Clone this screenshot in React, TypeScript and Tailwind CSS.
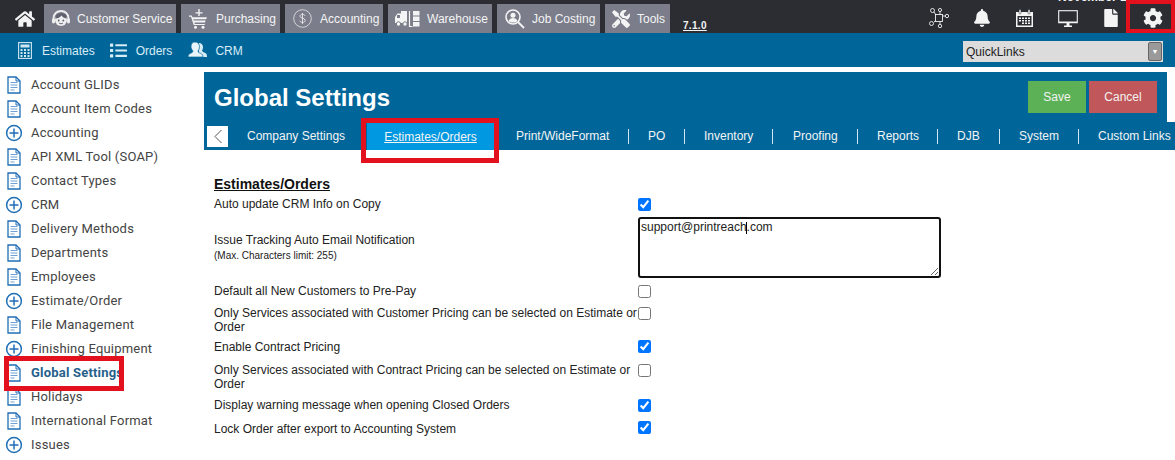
import type { ReactNode } from "react";
import { FaHome, FaBell, FaFile, FaCog, FaTools, FaList } from "react-icons/fa";

const sidebarItems = [
  { label: "Account GLIDs", kind: "doc" },
  { label: "Account Item Codes", kind: "doc" },
  { label: "Accounting", kind: "plus" },
  { label: "API XML Tool (SOAP)", kind: "doc" },
  { label: "Contact Types", kind: "doc" },
  { label: "CRM", kind: "plus" },
  { label: "Delivery Methods", kind: "doc" },
  { label: "Departments", kind: "doc" },
  { label: "Employees", kind: "doc" },
  { label: "Estimate/Order", kind: "plus" },
  { label: "File Management", kind: "doc" },
  { label: "Finishing Equipment", kind: "plus" },
  { label: "Global Settings", kind: "doc", active: true },
  { label: "Holidays", kind: "doc" },
  { label: "International Format", kind: "doc" },
  { label: "Issues", kind: "plus" },
  { label: "", kind: "doc" },
];

const settingsTabs = [
  { label: "Print/WideFormat", size: "w-[135px] pl-[22px]" },
  { label: "PO", size: "w-[56px] pl-[19px]" },
  { label: "Inventory", size: "w-[88px] pl-[19px]" },
  { label: "Proofing", size: "w-[85px] pl-[20px]" },
  { label: "Reports", size: "w-[80px] pl-[19px]" },
  { label: "DJB", size: "w-[62px] pl-[19px]" },
  { label: "System", size: "w-[79px] pl-[19px]" },
];

function DocIcon() {
  return (
    <svg width="16" height="18" viewBox="0 0 16 18" fill="none" className="shrink-0">
      <path d="M2 1h8l4 4v12H2z" stroke="#1f6fb5" strokeWidth="1.3" fill="#fff" />
      <path d="M10 1v4h4" stroke="#1f6fb5" strokeWidth="1" />
      <path d="M4.500 6.500h7M4.500 9h7M4.500 11.500h7M4.500 14h4" stroke="#6fa3d6" strokeWidth="1.2" />
    </svg>
  );
}

function PlusIcon() {
  return (
    <svg width="18" height="18" viewBox="0 0 18 18" fill="none" className="ml-[-1px] mr-[-1px] shrink-0">
      <circle cx="9" cy="9" r="7.400" stroke="#1f6fb5" strokeWidth="1.500" />
      <path d="M9 4.500v9M4.500 9h9" stroke="#1f6fb5" strokeWidth="1.500" />
    </svg>
  );
}

function AgentIcon() {
  return (
    <svg width="20" height="20" viewBox="0 0 20 20" fill="none">
      <path d="M2.500 12V9.500C2.500 5 6 2 10 2s7.500 3 7.500 7.500V12" stroke="#eeeef0" strokeWidth="2" />
      <rect x="1" y="9.500" width="3" height="5" rx="1.400" fill="#eeeef0" />
      <rect x="16" y="9.500" width="3" height="5" rx="1.400" fill="#eeeef0" />
      <circle cx="10" cy="11" r="6" fill="#eeeef0" />
      <path d="M4.500 9.500C7 9.500 9 8.500 10.500 6.500c1 1.500 2.500 2.700 5 3L15 5.500 10 4 5.500 5.500z" fill="#5f626d" />
      <circle cx="7.700" cy="11.500" r=".9" fill="#5f626d" />
      <circle cx="12.300" cy="11.500" r=".9" fill="#5f626d" />
      <path d="M8 14c1.300 1 2.700 1 4 0" stroke="#5f626d" strokeWidth=".9" />
    </svg>
  );
}

function CartIcon() {
  return (
    <svg width="18" height="20" viewBox="0 0 18 20" fill="#f4f4f5">
      <path d="M9.300 0h1.400v3.200H13.500v1.300h-2.800V7H9.300V4.500H6.500V3.200h2.800z" />
      <path d="M0 6.500h2.800l.7 1.700H18l-.9 2H4.300l.4 1.300h11.900l-.6 2H5.400l.4 1.400h10v1.200H4.700L2 7.700H0z" />
      <circle cx="6.500" cy="18.300" r="1.500" />
      <circle cx="14" cy="18.300" r="1.500" />
    </svg>
  );
}

function DollarIcon() {
  return (
    <svg width="19" height="19" viewBox="0 0 19 19" fill="none">
      <circle cx="9.500" cy="9.500" r="8.800" stroke="#e8e8ea" strokeWidth=".8" />
      <path d="M12 6.800c-.4-1-1.300-1.500-2.500-1.500-1.400 0-2.500.7-2.500 1.900 0 2.600 5.200 1.400 5.200 4.200 0 1.200-1.200 2-2.700 2-1.300 0-2.400-.6-2.800-1.700M9.500 4v11" stroke="#e8e8ea" strokeWidth=".9" />
    </svg>
  );
}

function WarehouseIcon() {
  return (
    <svg width="25" height="18" viewBox="0 0 25 18" fill="none">
      <path d="M0 13V7l2.500-3.500H6V1h6v12z" fill="#f4f4f5" />
      <rect x="2" y="5" width="3" height="3" fill="#7b7e8a" />
      <circle cx="3.500" cy="14" r="2.200" fill="#f4f4f5" stroke="#7b7e8a" />
      <circle cx="10" cy="14" r="2.200" fill="#f4f4f5" stroke="#7b7e8a" />
      <path d="M14.500 1v15.500h3" stroke="#f4f4f5" strokeWidth="1.200" />
      <rect x="18" y="1" width="6.500" height="4.500" fill="#f4f4f5" />
      <rect x="18" y="6.500" width="6.500" height="4.500" fill="#f4f4f5" />
      <rect x="18" y="12" width="6.500" height="4.500" fill="#f4f4f5" />
    </svg>
  );
}

function CostingIcon() {
  return (
    <svg width="20" height="20" viewBox="0 0 20 20" fill="none">
      <circle cx="8" cy="8" r="7" stroke="#f4f4f5" strokeWidth="1.600" />
      <circle cx="8" cy="6.200" r="2.500" fill="#f4f4f5" />
      <path d="M3.500 12c.8-2 2.500-3 4.500-3s3.700 1 4.500 3c-2.500 2-6.500 2-9 0z" fill="#f4f4f5" />
      <path d="M13 13l6 6" stroke="#f4f4f5" strokeWidth="1.800" />
    </svg>
  );
}

function NetworkIcon() {
  return (
    <svg width="20" height="20" viewBox="0 0 20 20" fill="none" stroke="#f0f0f2" strokeWidth=".9">
      <rect x="6.500" y="6.500" width="7" height="7" />
      <circle cx="3.500" cy="2.500" r="2" />
      <circle cx="11" cy="2" r="1.600" />
      <circle cx="18" cy="8" r="1.700" />
      <circle cx="2.500" cy="15.500" r="2" />
      <circle cx="11" cy="18" r="1.700" />
      <path d="M5 4l2 3M11 3.500v3M13.500 8h3M5 14l2-1.500M11 13.500v3" />
    </svg>
  );
}

function CalendarIcon() {
  return (
    <svg width="19" height="19" viewBox="0 0 19 19" fill="none">
      <path d="M1 3h17v15H1z" fill="#f4f4f5" />
      <rect x="2.500" y="7" width="14" height="9.500" fill="#2b2d33" />
      <rect x="4" y="0.500" width="2" height="4.500" rx="1" fill="#f4f4f5" stroke="#2b2d33" strokeWidth=".5" />
      <rect x="13" y="0.500" width="2" height="4.500" rx="1" fill="#f4f4f5" stroke="#2b2d33" strokeWidth=".5" />
      <path d="M4 8.500h2v1.600H4zM7 8.500h2v1.600H7zM10 8.500h2v1.600h-2zM13 8.500h2v1.600h-2zM4 11h2v1.600H4zM7 11h2v1.600H7zM10 11h2v1.600h-2zM13 11h2v1.600h-2zM7 13.500h2v1.600H7zM10 13.500h2v1.600h-2zM13 13.500h2v1.600h-2z" fill="#f4f4f5" />
    </svg>
  );
}

function MonitorIcon() {
  return (
    <svg width="20" height="19" viewBox="0 0 20 19" fill="none">
      <rect x=".7" y="1.700" width="18.600" height="12" stroke="#f4f4f5" strokeWidth="1.100" />
      <path d="M1 12.500h18v1.500H1zM8.500 14h3v2.500h-3zM6 16.500h8V18H6z" fill="#f4f4f5" />
    </svg>
  );
}

function CalculatorIcon() {
  return (
    <svg width="14" height="17" viewBox="0 0 14 17" fill="none">
      <rect x=".6" y=".6" width="12.800" height="15.800" stroke="#cfe6f2" strokeWidth="1.100" />
      <rect x="2.500" y="2.500" width="9" height="3" fill="#cfe6f2" />
      <path d="M2.500 7h2v2h-2zM6 7h2v2H6zM9.500 7h2v2h-2zM2.500 10h2v2h-2zM6 10h2v2H6zM9.500 10h2v2h-2zM2.500 13h2v2h-2zM6 13h2v2H6zM9.500 13h2v2h-2z" fill="#cfe6f2" />
    </svg>
  );
}

function ContactsIcon() {
  return (
    <svg width="19" height="18" viewBox="0 0 19 18" fill="none">
      <path d="M11 2c2.500 0 4 1.800 4 4.300 0 1.300-.4 2.500-1 3.300.3 1.400 2.500 2 4 3 .7.500 1 1.500 1 3.400H11z" fill="#d8ecf6" />
      <path d="M7 1c2.800 0 4.500 2 4.500 4.800 0 1.600-.5 3-1.300 3.900-.2 1 .1 1.500 1 2 1.700.8 3.800 1.300 3.800 4.300H0c0-3 2.100-3.500 3.800-4.300.9-.5 1.200-1 1-2C4 8.800 3 7.400 3 5.800 3 3 4.200 1 7 1z" fill="#e8f4fa" stroke="#00669a" strokeWidth=".7" />
    </svg>
  );
}

function TopTab({ icon, label, size }: { icon: ReactNode; label: string; size: string }) {
  return (
    <div className={`flex h-[29px] items-center bg-[#7b7e8a] text-xs text-[#f4f4f5] ${size}`}>
      {icon}
      <span className="pt-[1px]">{label}</span>
    </div>
  );
}

type SettingRowProps = {
  label: string;
  size: string;
  checked?: boolean;
  boxOffset?: string;
};

function SettingRow({ label, size, checked, boxOffset = "" }: SettingRowProps) {
  return (
    <div className={`flex ${size}`}>
      <label className="w-[424px] text-xs leading-[14px] text-[#222]">{label}</label>
      <input type="checkbox" defaultChecked={checked} className={`m-0 h-[13px] w-[13px] ${boxOffset}`} />
    </div>
  );
}

export default function App() {
  return (
    <div className="relative h-[460px] w-[1175px] overflow-hidden bg-white font-['Liberation_Sans',Arial,sans-serif]">
      {/* top bar */}
      <div className="flex h-[33px] items-end bg-[#2b2d33]">
        <div className="flex h-[29px] w-[44px] items-center justify-center pl-[5px] text-[#f4f4f5]">
          <FaHome size={20} />
        </div>
        <div className="flex gap-[5px]">
          <TopTab icon={<AgentIcon />} label="Customer Service" size="w-[132px] gap-[6px] pl-[7px]" />
          <TopTab icon={<CartIcon />} label="Purchasing" size="w-[99px] gap-[9px] pl-[8px]" />
          <TopTab icon={<DollarIcon />} label="Accounting" size="w-[98px] gap-[8px] pl-[8px]" />
          <TopTab icon={<WarehouseIcon />} label="Warehouse" size="w-[104px] gap-[7px] pl-[7px]" />
          <TopTab icon={<CostingIcon />} label="Job Costing" size="w-[103px] gap-[7px] pl-[8px]" />
          <TopTab icon={<FaTools size={18} />} label="Tools" size="w-[65px] gap-[7px] pl-[7px]" />
        </div>
        <span className="mb-[2px] ml-[13px] text-[10px] leading-[11px] font-bold tracking-[0.3px] text-[#f4f4f5] underline">7.1.0</span>
        <div className="ml-auto flex h-[33px] items-center pt-[3px] text-[#f4f4f5]">
          <div className="flex w-[43px] justify-center"><NetworkIcon /></div>
          <div className="flex w-[43px] justify-center"><FaBell size={18} /></div>
          <div className="flex w-[43px] justify-center"><CalendarIcon /></div>
          <div className="relative flex w-[43px] justify-center">
            <span className="absolute top-[-20px] left-[12px] text-xs font-bold whitespace-nowrap">November 1</span>
            <MonitorIcon />
          </div>
          <div className="flex w-[43px] justify-center"><FaFile size={18} /></div>
          <div className="flex w-[43px] justify-center pr-[1px]"><FaCog size={20} /></div>
        </div>
      </div>

      {/* second bar */}
      <div className="flex h-[34px] items-center bg-[#00669a] pl-[18px] text-xs text-[#d8ecf6]">
        <CalculatorIcon />
        <span className="ml-[10px] pt-[2px]">Estimates</span>
        <FaList size={17} className="ml-[15px]" />
        <span className="ml-[9px] pt-[2px]">Orders</span>
        <span className="ml-[16px]"><ContactsIcon /></span>
        <span className="ml-[8px] pt-[2px]">CRM</span>
        <div className="mt-[3px] mr-[12px] ml-auto flex h-[21px] w-[200px] items-center justify-between bg-[#dcdcdc] pr-[1px] pl-[3px] text-xs text-[#222]">
          <span>QuickLinks</span>
          <span className="flex h-[19px] w-[14px] items-center justify-center rounded-[2px] border border-[#666] bg-[#9a9a9a] text-[7px] text-white">▼</span>
        </div>
      </div>

      <div className="flex">
        {/* sidebar */}
        <div className="w-[204px] shrink-0 pt-[6px] pl-[6px] font-['Roboto',sans-serif]">
          {sidebarItems.map((item, i) => (
            <div key={i} className="flex h-[24px] items-center gap-[9px] text-[13px] tracking-[0.2px] whitespace-nowrap text-[#444]">
              {item.kind === "doc" ? <DocIcon /> : <PlusIcon />}
              <span className={item.active ? "font-bold text-[#26618c]" : ""}>{item.label}</span>
            </div>
          ))}
        </div>

        {/* main */}
        <div className="min-w-0 flex-1 pt-[5px]">
          <div className="mr-[8px] flex h-[50px] items-start justify-between bg-[#00669a] pr-[10px] pl-[10px]">
            <h1 className="mt-[12px] text-2xl leading-[28px] font-bold text-white">Global Settings</h1>
            <div className="mt-[9px] flex gap-[3px] text-xs">
              <button className="h-[32px] w-[58px] bg-[#5cb157] text-[#f2f2f2]">Save</button>
              <button className="h-[32px] w-[68px] bg-[#c0585b] text-[#f2f2f2]">Cancel</button>
            </div>
          </div>
          <div className="flex h-[28px] items-center bg-[#00669a] text-xs whitespace-nowrap text-[#f4f4f5]">
            <div className="ml-[3px] flex h-[21px] w-[21px] items-center justify-center bg-white">
              <svg width="10" height="15" viewBox="0 0 10 15" fill="none">
                <path d="M8.500 1L2 7.500 8.500 14" stroke="#555" strokeWidth="1" />
              </svg>
            </div>
            <div className="w-[139px] pl-[19px]">Company Settings</div>
            <div className="flex h-[27px] w-[127px] items-center justify-center self-end bg-[#0098e0] underline">Estimates/Orders</div>
            {settingsTabs.map((tab) => (
              <div key={tab.label} className={`h-[15px] border-r border-[#cfe6f2] leading-[15px] ${tab.size}`}>
                {tab.label}
              </div>
            ))}
            <div className="pl-[19px]">Custom Links</div>
          </div>

          <div className="pt-[26px] pl-[10px]">
            <h2 className="mb-[2px] text-sm leading-[16px] font-bold text-[#111] underline">Estimates/Orders</h2>
            <SettingRow label="Auto update CRM Info on Copy" size="h-[20px] items-center" checked />
            <div className="flex h-[67px] items-center">
              <div className="w-[424px] text-xs leading-[16px] text-[#222]">
                <div>Issue Tracking Auto Email Notification</div>
                <div className="text-[10px]">(Max. Characters limit: 255)</div>
              </div>
              <div className="relative">
                <textarea
                  defaultValue="support@printreach.com"
                  className="block h-[61px] w-[303px] rounded-[3px] border-2 border-[#111] px-[1px] py-0 text-xs text-[#222] outline-none"
                />
                <div className="absolute top-[5px] left-[108px] h-[12px] w-px bg-black" />
              </div>
            </div>
            <SettingRow label="Default all New Customers to Pre-Pay" size="h-[20px] items-center" />
            <SettingRow label="Only Services associated with Customer Pricing can be selected on Estimate or Order" size="h-[34px] items-start pt-[5px]" boxOffset="mt-[1px]" />
            <SettingRow label="Enable Contract Pricing" size="h-[24px] items-center" checked boxOffset="mb-[2px]" />
            <SettingRow label="Only Services associated with Contract Pricing can be selected on Estimate or Order" size="h-[32px] items-start pt-[4px]" boxOffset="mt-[1px]" />
            <SettingRow label="Display warning message when opening Closed Orders" size="h-[28px] items-center" checked />
            <SettingRow label="Lock Order after export to Accounting System" size="h-[20px] items-center" checked boxOffset="mb-[4px]" />
          </div>
        </div>
      </div>

      {/* red annotation boxes */}
      <div className="absolute top-0 left-[1126px] h-[33px] w-[49px] border-4 border-[#e3101e]" />
      <div className="absolute top-[118px] left-[361px] h-[45px] w-[138px] border-[5px] border-[#e3101e]" />
      <div className="absolute top-[356px] left-[4px] h-[35px] w-[120px] border-[5px] border-[#e3101e]" />
    </div>
  );
}
